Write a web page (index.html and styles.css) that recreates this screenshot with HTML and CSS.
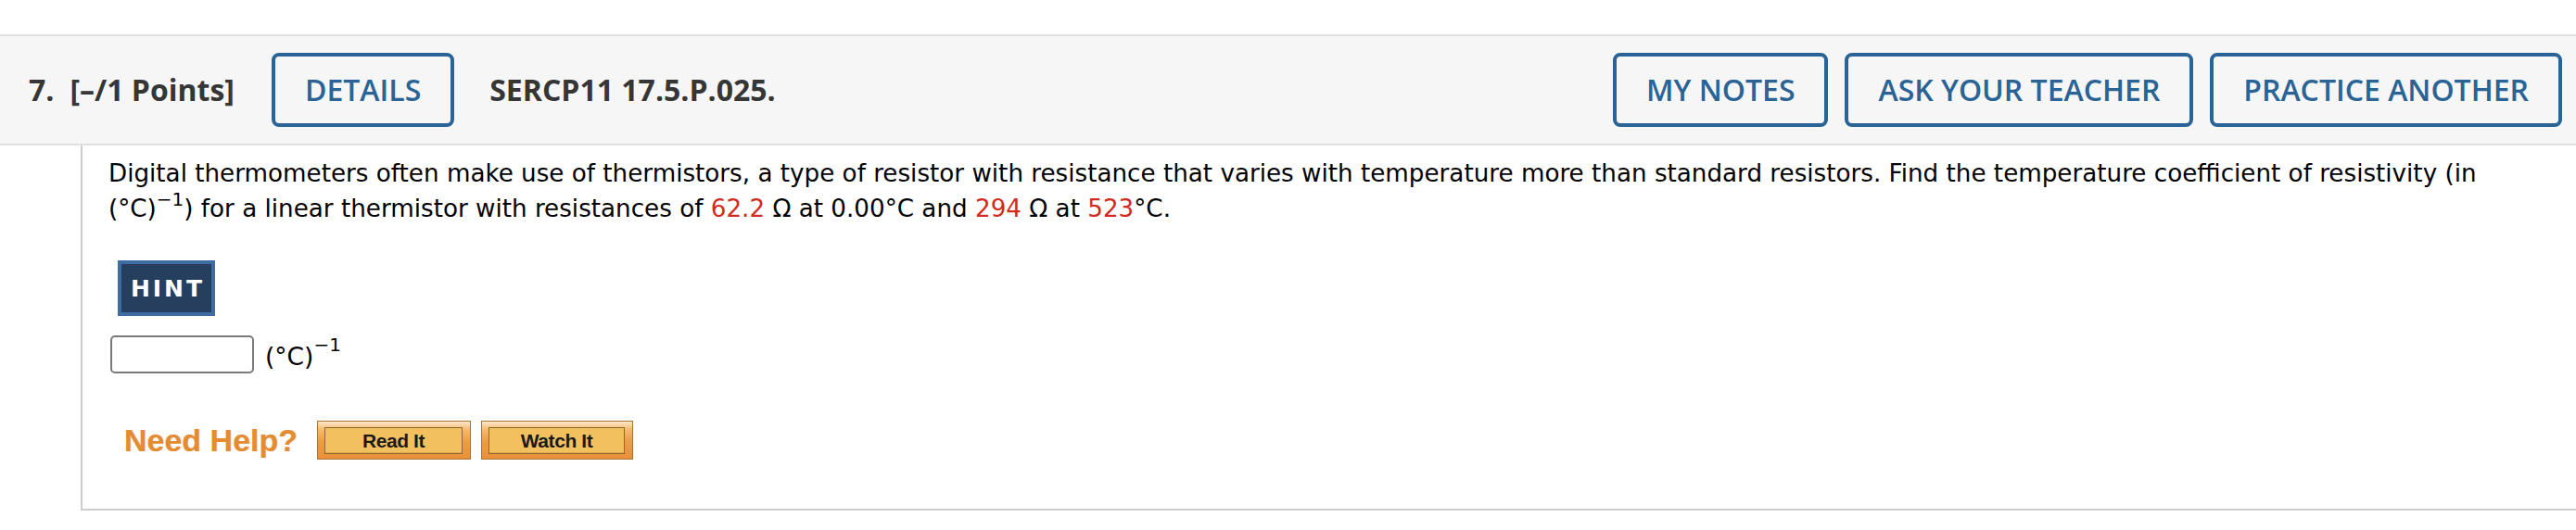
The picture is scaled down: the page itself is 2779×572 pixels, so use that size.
FILE: index.html
```html
<!DOCTYPE html>
<html lang="en">
<head>
<meta charset="utf-8">
<title>Question 7</title>
<link rel="stylesheet" href="styles.css">
</head>
<body>
<div class="question-header">
  <span class="qnum">7.</span>
  <span class="points">[–/1 Points]</span>
  <button class="outline-btn">DETAILS</button>
  <span class="qcode">SERCP11 17.5.P.025.</span>
  <div class="header-actions">
    <button class="outline-btn">MY NOTES</button>
    <button class="outline-btn">ASK YOUR TEACHER</button>
    <button class="outline-btn">PRACTICE ANOTHER</button>
  </div>
</div>
<div class="question-body">
  <p class="question-text">Digital thermometers often make use of thermistors, a type of resistor with resistance that varies with temperature more than standard resistors. Find the temperature coefficient of resistivity (in <span class="nowrap">(°C)<sup>−1</sup>)</span> for a linear thermistor with resistances of <span class="red">62.2</span> Ω at 0.00°C and <span class="red">294</span> Ω at <span class="red">523</span>°C.</p>
  <button class="hint-btn">HINT</button>
  <div class="answer-row">
    <input class="answer-input" type="text" aria-label="answer">
    <span class="unit">(°C)<sup>−1</sup></span>
  </div>
  <div class="help-row">
    <span class="need-help">Need Help?</span>
    <button class="help-btn read"><span>Read It</span></button>
    <button class="help-btn watch"><span>Watch It</span></button>
  </div>
</div>
</body>
</html>
```
FILE: styles.css
```css
html, body {
  margin: 0;
  padding: 0;
  background: #ffffff;
}

body {
  font-family: "DejaVu Sans", Verdana, sans-serif;
  color: #000;
}

.question-header {
  margin-top: 37px;
  height: 116px;
  border-top: 2px solid #e0e0e0;
  border-bottom: 2px solid #e0e0e0;
  background: #f6f6f6;
  display: flex;
  align-items: center;
  padding: 0 15px 0 31px;
  font-family: "Open Sans", "DejaVu Sans", sans-serif;
  font-size: 32px;
  line-height: 44px;
  color: #363636;
}

.qnum {
  font-weight: 700;
  margin-right: 17px;
}

.points {
  font-weight: 700;
  margin-right: 40px;
}

.qcode {
  font-weight: 700;
  margin-left: 38px;
}

.header-actions {
  margin-left: auto;
  display: flex;
  gap: 18px;
}

.outline-btn {
  height: 80px;
  box-sizing: border-box;
  border: 4px solid #2a6395;
  border-radius: 8px;
  background: transparent;
  padding: 0 32px;
  font-family: "Open Sans", "DejaVu Sans", sans-serif;
  font-size: 32px;
  line-height: 44px;
  font-weight: 600;
  color: #2a6395;
  white-space: nowrap;
}

.question-body {
  margin-left: 87px;
  border-left: 2px solid #cdcdcd;
  border-bottom: 2px solid #cdcdcd;
  padding: 11px 39px 53px 28px;
}

.question-text {
  margin: 0;
  font-size: 26.2px;
  line-height: 38px;
}

.nowrap {
  white-space: nowrap;
}

.question-text sup {
  font-size: 20px;
  line-height: 0;
  vertical-align: 12px;
}

.red {
  color: #d12b22;
}

.hint-btn {
  display: flex;
  align-items: center;
  justify-content: center;
  margin: 37px 0 0 10px;
  width: 105px;
  height: 60px;
  box-sizing: border-box;
  border: 4px solid #3d6ca3;
  background: #263f5e;
  color: #ffffff;
  font-family: "DejaVu Sans", Verdana, sans-serif;
  font-weight: 700;
  font-size: 25px;
  letter-spacing: 3px;
  padding: 0 0 0 3px;
}

.answer-row {
  margin-top: 21px;
  display: flex;
  align-items: center;
}

.answer-input {
  width: 155px;
  height: 41px;
  box-sizing: border-box;
  border: 2px solid #7a7a7a;
  border-radius: 5px;
  background: #fff;
  margin: 0 0 0 2px;
  padding: 0 6px;
}

.unit {
  margin-left: 12px;
  font-size: 26.5px;
  line-height: 30px;
  padding-top: 4px;
}

.unit sup {
  font-size: 20px;
  line-height: 0;
  vertical-align: 15px;
}

.help-row {
  margin-top: 51px;
  display: flex;
  align-items: center;
}

.need-help {
  margin-left: 17px;
  margin-right: 21px;
  font-family: "Liberation Sans", Arial, sans-serif;
  font-weight: 700;
  font-size: 34px;
  color: #e58c33;
  text-shadow: 0 0 1px rgba(229, 140, 51, 0.5);
}

.help-btn {
  height: 42px;
  box-sizing: border-box;
  border: 1px solid #a87434;
  background: linear-gradient(to bottom, #fde7cc 0%, #f6b86c 22%, #ee9c43 55%, #e9903a 100%);
  padding: 6px 8px 5px 7px;
  margin: 0;
  display: flex;
}

.help-btn.read {
  width: 166px;
  margin-right: 11px;
}

.help-btn.watch {
  width: 164px;
}

.help-btn span {
  flex: 1;
  display: flex;
  align-items: center;
  justify-content: center;
  border: 1px solid #8d6a38;
  background: #f3c060;
  box-shadow: inset 0 -1px 0 #e0a848;
  font-family: "Liberation Sans", Arial, sans-serif;
  font-weight: 700;
  font-size: 21px;
  color: #1a1a1a;
  letter-spacing: -0.4px;
}
```
